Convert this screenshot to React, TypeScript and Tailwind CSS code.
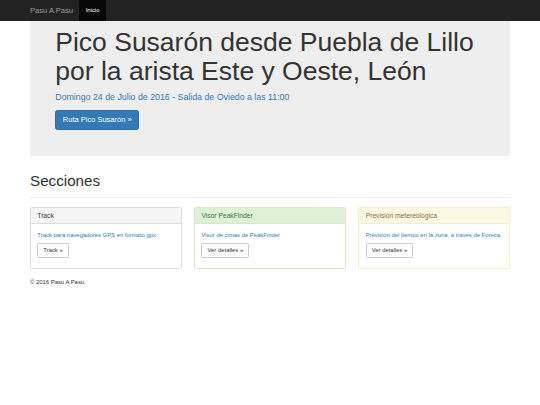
const panels = [
  {
    title: "Track",
    text: "Track para navegadores GPS en formato gpx",
    button: "Track »",
    border: "border-[#ddd]",
    head: "bg-[#f5f5f5] text-[#333] border-[#ddd]",
  },
  {
    title: "Visor PeakFinder",
    text: "Visor de cimas de PeakFinder",
    button: "Ver detalles »",
    border: "border-[#d6e9c6]",
    head: "bg-[#dff0d8] text-[#3c763d] border-[#d6e9c6]",
  },
  {
    title: "Previsión metereológica",
    text: "Previsión del tiempo en la zona, a través de Foreca.",
    button: "Ver detalles »",
    border: "border-[#faebcc]",
    head: "bg-[#fcf8e3] text-[#8a6d3b] border-[#faebcc]",
  },
];

export default function App() {
  return (
    <div className="min-h-[405px] bg-white font-['Liberation_Sans',Arial,sans-serif] text-[#333]">
      {/* Navbar */}
      <nav className="h-[21px] bg-[#222]">
        <div className="mx-auto flex h-full w-[480px] items-stretch">
          <a className="flex items-center pr-[6.3px] text-[7.6px] text-[#9d9d9d]">Pasu A Pasu</a>
          <a className="flex items-center bg-[#080808] px-[6.3px] text-[5.9px] text-white">Inicio</a>
        </div>
      </nav>

      <div className="mx-auto w-[480px]">
        {/* Jumbotron */}
        <div className="rounded-b-[2.5px] bg-[#eee] px-[25.3px] pt-[7.4px] pb-[26px]">
          <h1 className="mb-[4.2px] text-[26.5px] leading-[29px] font-normal text-[#333]">
            Pico Susarón desde Puebla de Lillo por la arista Este y Oeste, León
          </h1>
          <p className="mb-[7px] text-[8.8px] leading-[12.6px] text-[#337ab7]">
            Domingo 24 de Julio de 2016 - Salida de Oviedo a las 11:00
          </p>
          <div className="flex">
            <a className="rounded-[2.5px] border border-[#2e6da4] bg-[#337ab7] px-[6.5px] py-[3.8px] text-[7.5px] leading-[10px] text-white">
              Ruta Pico Susarón »
            </a>
          </div>
        </div>

        {/* Secciones */}
        <div className="mt-[16.8px] mb-[8.4px] border-b border-[#eee] pb-[3.8px]">
          <h1 className="mb-[4.2px] text-[15.2px] leading-[16.7px] font-normal">Secciones</h1>
        </div>

        <div className="grid grid-cols-3 gap-x-[12.6px]">
          {panels.map((p) => (
            <div key={p.title} className={`rounded-[1.7px] border bg-white ${p.border}`}>
              <div className={`border-b px-[6.3px] py-[4.2px] text-[6.7px] leading-[7.4px] ${p.head}`}>
                {p.title}
              </div>
              <div className="p-[6.3px]">
                <p className="mb-[4.2px] whitespace-nowrap text-[5.9px] leading-[8.4px] text-[#337ab7]">{p.text}</p>
                <div className="mb-[4.2px] flex">
                  <a className="rounded-[1.7px] border border-[#ccc] bg-white px-[5px] py-[2px] text-[5.9px] leading-[8.4px] text-[#333]">
                    {p.button}
                  </a>
                </div>
              </div>
            </div>
          ))}
        </div>

        <footer className="mt-[8.4px]">
          <p className="text-[5.9px] leading-[8.4px]">© 2016 Pasu A Pasu.</p>
        </footer>
      </div>
    </div>
  );
}
